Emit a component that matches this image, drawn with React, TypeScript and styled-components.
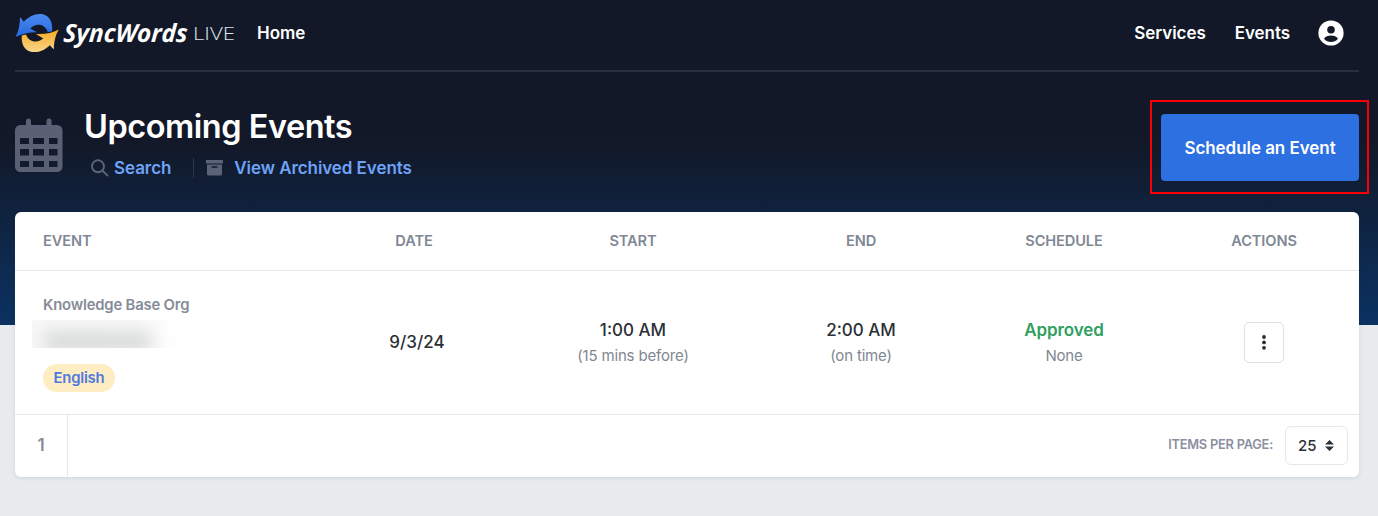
import React from "react";
import styled, { createGlobalStyle } from "styled-components";

const Global = createGlobalStyle`
  * { box-sizing: border-box; }
  body { margin: 0; background: #e7ebee; font-family: Inter, "Liberation Sans", sans-serif; color: #2b3036; }
  a { text-decoration: none; color: inherit; }
  button { font: inherit; margin: 0; cursor: pointer; }
`;

const Page = styled.div`
  height: 516px;
  padding: 0 19px 0 15px;
  background: linear-gradient(#121827 0, #121827 140px, #0b3262 325px, #e7ebee 325px);
  overflow: hidden;
`;
const NavBar = styled.header`
  height: 72px;
  border-bottom: 2px solid #2b2e3f;
  display: flex;
  align-items: center;
  padding: 0 15px 4px 0;
`;
const NavLink = styled.a<{ $gap: number }>`
  margin-left: ${(p) => p.$gap}px;
  font-size: 17px;
  line-height: 24px;
  font-weight: 600;
  letter-spacing: -0.05px;
  color: #fff;
`;
const Spacer = styled.div`flex: 1;`;
const Logo = styled.svg`display: block; overflow: visible; flex: none;`;
const Avatar = styled.svg`display: block; margin-left: 28px;`;

const Heading = styled.section`
  height: 140px;
  display: flex;
  padding-top: 36px;
`;
const CalendarIcon = styled.svg`display: block; flex: none; margin-top: 10px;`;
const TitleBlock = styled.div`margin-left: 22px;`;
const Title = styled.h1`
  margin: -1px 0 0 -1px;
  font-size: 32.5px;
  line-height: 40px;
  font-weight: 600;
  letter-spacing: -0.48px;
  color: #fff;
  white-space: nowrap;
`;
const Links = styled.div`
  display: flex;
  align-items: center;
  height: 20px;
  margin-top: 11px;
  padding-left: 6px;
`;
const TextLink = styled.a<{ $gap: number }>`
  margin-left: ${(p) => p.$gap}px;
  font-size: 17px;
  line-height: 20px;
  font-weight: 600;
  letter-spacing: -0.07px;
  color: #6ea3f8;
  white-space: nowrap;
`;
const Divider = styled.span`
  width: 1px;
  height: 20px;
  margin: 0 12px 0 22px;
  background: #2d364a;
`;
const Highlight = styled.div`
  width: 219px;
  height: 94px;
  margin: -8px -10px 0 0;
  border: 2px solid #f80005;
  padding: 12px 8px 0 9px;
`;
const PrimaryButton = styled.button`
  display: block;
  width: 198px;
  height: 67px;
  padding: 0;
  border: 0;
  border-radius: 4px;
  background: #2c70e2;
  color: #fff;
  font-size: 17px;
  font-weight: 600;
  letter-spacing: -0.05px;
`;

const Card = styled.main`
  height: 265px;
  border-radius: 6px;
  background: #fff;
  box-shadow: 0 1px 4px rgba(40, 60, 80, 0.13);
`;
const Row = styled.div<{ $height: number }>`
  display: grid;
  grid-template-columns: 310px 178px 260px 196px 210px 190px;
  align-items: center;
  height: ${(p) => p.$height}px;
  border-bottom: 1px solid #e6e8eb;
`;
const HeadCell = styled.div<{ $first?: boolean }>`
  padding-left: ${(p) => (p.$first ? 28 : 0)}px;
  text-align: ${(p) => (p.$first ? "left" : "center")};
  font-size: 14.6px;
  line-height: 20px;
  font-weight: 600;
  letter-spacing: -0.1px;
  color: #7f8894;
`;
const EventCell = styled.div`
  align-self: start;
  padding: 24px 0 0 28px;
`;
const Org = styled.div`
  font-size: 14.8px;
  line-height: 20px;
  font-weight: 600;
  letter-spacing: -0.17px;
  color: #868c97;
`;
const Redacted = styled.div`
  width: 150px;
  height: 28px;
  margin: 5px 0 16px -11px;
  overflow: hidden;
  background: linear-gradient(90deg, #f8f8f8, #fafafa 70%, #fff 98%);
`;
const Smear = styled.div`
  width: 108px;
  height: 19px;
  margin: 12px 0 0 12px;
  background: #d4d6d7;
  filter: blur(9px);
`;
const Tag = styled.span`
  display: inline-flex;
  align-items: center;
  height: 28px;
  padding: 0 0 1px;
  justify-content: center;
  width: 72px;
  border-radius: 14px;
  background: #feecc3;
  color: #4d79df;
  font-size: 14.8px;
  font-weight: 600;
  letter-spacing: -0.2px;
`;
const Cell = styled.div<{ $shift?: boolean }>`
  text-align: center;
  padding: ${(p) => (p.$shift ? "0 0 2px 6px" : "0")};
`;
const Value = styled.div<{ $green?: boolean }>`
  font-size: 17px;
  line-height: 26px;
  font-weight: ${(p) => (p.$green ? 600 : 500)};
  letter-spacing: ${(p) => (p.$green ? "-0.08px" : "0")};
  color: ${(p) => (p.$green ? "#2fa061" : "#2b3036")};
`;
const Note = styled.div`
  font-size: 15px;
  line-height: 26px;
  letter-spacing: -0.17px;
  color: #7f8792;
`;
const MenuButton = styled.button`
  display: inline-flex;
  align-items: center;
  justify-content: center;
  width: 40px;
  height: 41px;
  padding: 0;
  border: 1px solid #dcdfe5;
  border-radius: 5px;
  background: #fff;
  vertical-align: middle;
`;
const Footer = styled.footer`
  display: flex;
  align-items: center;
  height: 62px;
  padding-right: 11px;
`;
const PageNumber = styled.div`
  width: 53px;
  height: 62px;
  border-right: 1px solid #e6e8eb;
  text-align: center;
  font-size: 17px;
  line-height: 60px;
  font-weight: 600;
  color: #858b99;
`;
const PerPage = styled.span`
  margin-bottom: 3px;
  font-size: 12.8px;
  font-weight: 600;
  letter-spacing: -0.22px;
  color: #8b90a0;
`;
const Select = styled.button`
  display: flex;
  align-items: center;
  justify-content: space-between;
  width: 63px;
  height: 39px;
  margin: 0 0 2px 12px;
  padding: 0 13px 0 12px;
  border: 1px solid #e6e8eb;
  border-radius: 6px;
  background: #fff;
  color: #2b3036;
  font-size: 15px;
  font-weight: 500;
`;

const columns = ["EVENT", "DATE", "START", "END", "SCHEDULE", "ACTIONS"];

export default function App() {
  return (
    <Page>
      <Global />
      <NavBar>
        <Logo width="220" height="44" viewBox="15 12 220 44">
          <defs>
            <linearGradient id="blue" x1="0" y1="0" x2="0" y2="1">
              <stop offset="0" stopColor="#4a8bf2" />
              <stop offset="1" stopColor="#2467dc" />
            </linearGradient>
            <linearGradient id="gold" x1="0" y1="0" x2="0" y2="1">
              <stop offset="0" stopColor="#f5aa20" />
              <stop offset="1" stopColor="#fad58d" />
            </linearGradient>
          </defs>
          <path fill="url(#blue)" d="M20 18 L23.800 22.800 C29 17 36 14 43 15.200 C50 17 53 24 52 32.500 L47.700 33 C45.500 25.500 36.500 23 30.300 29.600 L37 33.300 Q26 33 15.500 38 C18.800 32 20 25 20 18Z" />
          <path fill="url(#gold)" d="M58.800 30.500 C55 37 54 43 53.800 50.500 L49.800 46.200 C45 51 39 53.800 32 52.900 C24 52 21 44 21.800 36.500 L26 35.500 C28.500 42.500 36.500 45 43.300 39.600 L36 35 C45 35.500 52 34 58.800 30.500Z" />
          <text transform="translate(63 42.500) skewX(-4)" fill="#fff" fontFamily="'Open Sans', sans-serif" fontSize="25" fontWeight="700" fontStyle="italic" textLength="124" lengthAdjust="spacingAndGlyphs">SyncWords</text>
          <text x="193" y="41" fill="#dfe2e8" fontFamily="'Open Sans', sans-serif" fontSize="18.5" fontWeight="300" textLength="42" lengthAdjust="spacingAndGlyphs">LIVE</text>
        </Logo>
        <NavLink $gap={22} href="#">Home</NavLink>
        <Spacer />
        <NavLink $gap={0} href="#">Services</NavLink>
        <NavLink $gap={29} href="#">Events</NavLink>
        <Avatar width="26" height="26" viewBox="0 0 26 26">
          <circle cx="13" cy="13" r="12.6" fill="#fff" />
          <circle cx="13" cy="9.8" r="3.8" fill="#121827" />
          <path fill="#121827" d="M6 18.7 C8.4 14.3 17.6 14.3 20 18.7 C16.5 23 9.5 23 6 18.7Z" />
        </Avatar>
      </NavBar>

      <Heading>
        <CalendarIcon width="48" height="54" viewBox="0 0 48 54">
          <path fill="#5c6075" fillRule="evenodd" d="M5.500 7H11V3a2.500 2.500 0 0 1 5 0V7H31.500V3a2.500 2.500 0 0 1 5 0V7H42a5.500 5.500 0 0 1 5.500 5.500V48.500a5.500 5.500 0 0 1-5.500 5.500H5.500A5.500 5.500 0 0 1 0 48.500V12.500A5.500 5.500 0 0 1 5.500 7ZM5 20v6h9v-6ZM18 20v6h11v-6ZM34 20v6h8.500v-6ZM5 31v6.500h9v-6.500ZM18 31v6.500h11v-6.500ZM34 31v6.500h8.500v-6.500ZM5 43v6h9v-6ZM18 43v6h11v-6ZM34 43v6h8.500v-6Z" />
        </CalendarIcon>
        <TitleBlock>
          <Title>Upcoming Events</Title>
          <Links>
            <svg width="18" height="18" viewBox="0 0 18 18" fill="none" stroke="#5c6478" strokeWidth="1.9">
              <circle cx="7" cy="7.300" r="6" />
              <path d="M11.500 11.800 17 17" />
            </svg>
            <TextLink $gap={5} href="#">Search</TextLink>
            <Divider />
            <svg width="17" height="16" viewBox="0 0 17 16" fill="#5a6276">
              <path d="M0 0H17V3.500H0Z" />
              <path fillRule="evenodd" d="M1 4.500H16V14a1.500 1.500 0 0 1-1.500 1.500h-12A1.500 1.500 0 0 1 1 14ZM5.500 6.300v1.400h6v-1.400Z" />
            </svg>
            <TextLink $gap={11} href="#">View Archived Events</TextLink>
          </Links>
        </TitleBlock>
        <Spacer />
        <Highlight>
          <PrimaryButton>Schedule an Event</PrimaryButton>
        </Highlight>
      </Heading>

      <Card>
        <Row $height={59}>
          {columns.map((name, i) => (
            <HeadCell key={name} $first={i === 0}>{name}</HeadCell>
          ))}
        </Row>
        <Row $height={144}>
          <EventCell>
            <Org>Knowledge Base Org</Org>
            <Redacted><Smear /></Redacted>
            <Tag>English</Tag>
          </EventCell>
          <Cell $shift><Value>9/3/24</Value></Cell>
          <Cell><Value>1:00 AM</Value><Note>(15 mins before)</Note></Cell>
          <Cell><Value>2:00 AM</Value><Note>(on time)</Note></Cell>
          <Cell><Value $green>Approved</Value><Note>None</Note></Cell>
          <Cell>
            <MenuButton aria-label="Event actions">
              <svg width="4" height="15" viewBox="0 0 4 15" fill="#2b3036">
                <circle cx="2" cy="2" r="1.900" />
                <circle cx="2" cy="7.400" r="1.900" />
                <circle cx="2" cy="12.800" r="1.900" />
              </svg>
            </MenuButton>
          </Cell>
        </Row>
        <Footer>
          <PageNumber>1</PageNumber>
          <Spacer />
          <PerPage>ITEMS PER PAGE:</PerPage>
          <Select>
            25
            <svg width="9" height="11" viewBox="0 0 9 11" fill="#2b3036">
              <path d="M4.500 0 9 4.500H0Z M0 6.500H9L4.500 11Z" />
            </svg>
          </Select>
        </Footer>
      </Card>
    </Page>
  );
}
